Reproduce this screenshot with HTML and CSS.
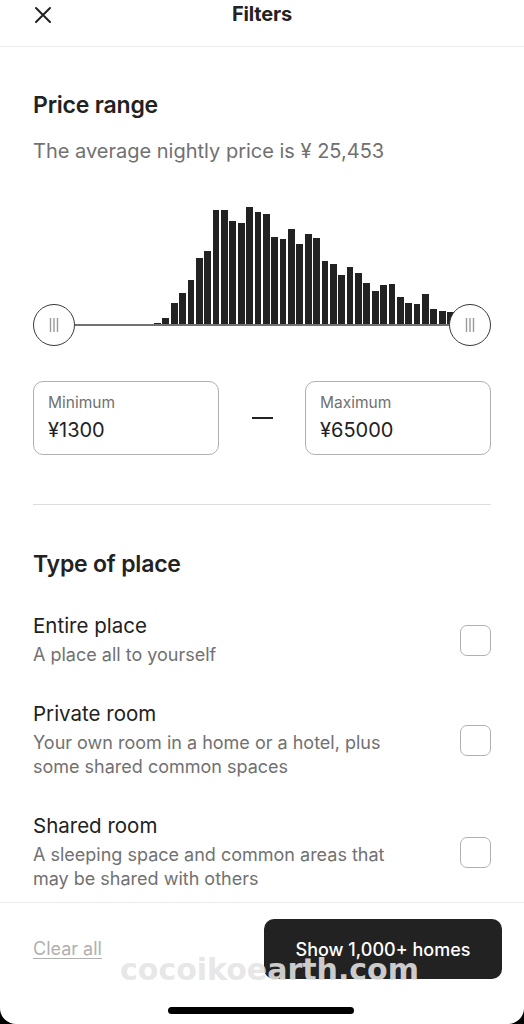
FILE: index.html
```html
<!DOCTYPE html>
<html lang="en">
<head>
<meta charset="utf-8">
<title>Filters</title>
<link rel="stylesheet" href="styles.css">
</head>
<body>
<div class="screen">
  <header class="topbar">
    <button class="close" aria-label="Close">
      <svg width="18" height="18" viewBox="0 0 18 18"><path d="M2 2 L16 16 M16 2 L2 16" stroke="#222" stroke-width="2" fill="none" stroke-linecap="round"/></svg>
    </button>
    <h1 class="title">Filters</h1>
    <span></span>
  </header>

  <main class="content">
    <section class="price">
      <h2 class="section-title first">Price range</h2>
      <p class="sub">The average nightly price is ¥ 25,453</p>

      <div class="hist">
        <span class="bar" style="height:2px"></span>
        <span class="bar" style="height:7px"></span>
        <span class="bar" style="height:22px"></span>
        <span class="bar" style="height:32px"></span>
        <span class="bar" style="height:45px"></span>
        <span class="bar" style="height:67px"></span>
        <span class="bar" style="height:74px"></span>
        <span class="bar" style="height:115px"></span>
        <span class="bar" style="height:115px"></span>
        <span class="bar" style="height:104px"></span>
        <span class="bar" style="height:102px"></span>
        <span class="bar" style="height:118px"></span>
        <span class="bar" style="height:113px"></span>
        <span class="bar" style="height:111px"></span>
        <span class="bar" style="height:88px"></span>
        <span class="bar" style="height:86px"></span>
        <span class="bar" style="height:96px"></span>
        <span class="bar" style="height:81px"></span>
        <span class="bar" style="height:91px"></span>
        <span class="bar" style="height:87px"></span>
        <span class="bar" style="height:64px"></span>
        <span class="bar" style="height:61px"></span>
        <span class="bar" style="height:50px"></span>
        <span class="bar" style="height:58px"></span>
        <span class="bar" style="height:52px"></span>
        <span class="bar" style="height:42px"></span>
        <span class="bar" style="height:34px"></span>
        <span class="bar" style="height:40px"></span>
        <span class="bar" style="height:41px"></span>
        <span class="bar" style="height:28px"></span>
        <span class="bar" style="height:22px"></span>
        <span class="bar" style="height:21px"></span>
        <span class="bar" style="height:31px"></span>
        <span class="bar" style="height:16px"></span>
        <span class="bar" style="height:14px"></span>
        <span class="bar" style="height:13px"></span>
      </div>

      <div class="track-row">
        <span class="handle">
          <svg width="12" height="16" viewBox="0 0 12 16"><path d="M2.5 1 V15 M6 1 V15 M9.5 1 V15" stroke="#9a9a9a" stroke-width="1.4"/></svg>
        </span>
        <span class="track"></span>
        <span class="handle">
          <svg width="12" height="16" viewBox="0 0 12 16"><path d="M2.5 1 V15 M6 1 V15 M9.5 1 V15" stroke="#9a9a9a" stroke-width="1.4"/></svg>
        </span>
      </div>

      <div class="inputs">
        <div class="field">
          <span class="field-label">Minimum</span>
          <span class="field-value">¥1300</span>
        </div>
        <span class="dash"></span>
        <div class="field">
          <span class="field-label">Maximum</span>
          <span class="field-value">¥65000</span>
        </div>
      </div>
    </section>

    <hr class="divider">

    <section class="types">
      <h2 class="section-title">Type of place</h2>
      <ul class="type-list">
        <li class="type-item">
          <div class="type-text">
            <div class="type-name">Entire place</div>
            <div class="type-desc">A place all to yourself</div>
          </div>
          <span class="checkbox"></span>
        </li>
        <li class="type-item">
          <div class="type-text">
            <div class="type-name">Private room</div>
            <div class="type-desc">Your own room in a home or a hotel, plus some shared common spaces</div>
          </div>
          <span class="checkbox"></span>
        </li>
        <li class="type-item">
          <div class="type-text">
            <div class="type-name">Shared room</div>
            <div class="type-desc">A sleeping space and common areas that may be shared with others</div>
          </div>
          <span class="checkbox"></span>
        </li>
      </ul>
    </section>
  </main>

  <footer class="footer">
    <a class="clear" href="#">Clear all</a>
    <button class="show">Show 1,000+ homes</button>
  </footer>

  <div class="watermark">cocoikoearth.com</div>
  <div class="home-indicator"></div>
</div>
</body>
</html>
```

FILE: styles.css
```css
* { box-sizing: border-box; }

html, body {
  margin: 0;
  padding: 0;
  background: #000;
}

body {
  font-family: "Inter", "Noto Sans", sans-serif;
  color: #222222;
}

.screen {
  position: relative;
  width: 524px;
  height: 1024px;
  background: #fff;
  display: flex;
  flex-direction: column;
  overflow: hidden;
  border-radius: 0 0 16px 16px;
}

/* header */
.topbar {
  flex: 0 0 auto;
  height: 47px;
  border-bottom: 1px solid #ebebeb;
  display: grid;
  grid-template-columns: 1fr auto 1fr;
  align-items: start;
}

.close {
  justify-self: start;
  margin: 6px 0 0 34px;
  padding: 0;
  border: 0;
  background: none;
  width: 18px;
  height: 18px;
  display: flex;
}

.title {
  margin: 0;
  font-size: 20px;
  line-height: 29px;
  font-weight: 700;
  letter-spacing: -0.2px;
}

/* content */
.content {
  flex: 1 1 auto;
  overflow: hidden;
  padding: 0 33px;
}

.section-title {
  margin: 44px 0 0;
  font-size: 23px;
  line-height: 30px;
  font-weight: 600;
  letter-spacing: -0.2px;
}

.section-title.first {
  margin-top: 43px;
}

.sub {
  margin: 17px 0 0;
  font-size: 20px;
  line-height: 28px;
  color: #717171;
}

/* histogram */
.hist {
  margin: 40px 0 0 121px;
  width: 300px;
  height: 120px;
  display: grid;
  grid-template-columns: repeat(36, 1fr);
  column-gap: 1.6px;
  align-items: end;
}

.bar {
  display: block;
  background: #222222;
}

.track-row {
  margin-top: -21px;
  height: 42px;
  display: flex;
  align-items: center;
}

.handle {
  flex: 0 0 42px;
  height: 42px;
  border-radius: 50%;
  border: 1.5px solid #3a3a3a;
  background: #fff;
  display: flex;
  align-items: center;
  justify-content: center;
  position: relative;
  z-index: 1;
}

.track {
  flex: 1 1 auto;
  height: 2px;
  background: #717171;
}

/* inputs */
.inputs {
  margin-top: 35px;
  display: flex;
  align-items: center;
  justify-content: space-between;
}

.field {
  width: 186px;
  height: 74px;
  border: 1px solid #b0b0b0;
  border-radius: 10px;
  padding: 11px 14px 0;
  display: flex;
  flex-direction: column;
  gap: 4px;
}

.field-label {
  font-size: 15.5px;
  line-height: 20px;
  color: #717171;
}

.field-value {
  font-size: 20px;
  line-height: 26px;
  color: #222;
}

.dash {
  width: 21px;
  height: 1.5px;
  background: #222;
}

.divider {
  margin: 49px 0 0;
  border: 0;
  border-top: 1px solid #dddddd;
}

/* types */
.type-list {
  list-style: none;
  margin: 34px 0 0;
  padding: 0;
  display: flex;
  flex-direction: column;
  gap: 34px;
}

.type-item {
  display: flex;
  align-items: center;
  justify-content: space-between;
}

.type-text {
  width: 380px;
}

.type-name {
  font-size: 20.5px;
  line-height: 26px;
  color: #222;
}

.type-desc {
  margin-top: 4px;
  font-size: 18px;
  line-height: 24px;
  color: #717171;
}

.checkbox {
  flex: 0 0 31px;
  height: 31px;
  border: 1px solid #b0b0b0;
  border-radius: 7px;
}

/* footer */
.footer {
  flex: 0 0 122px;
  border-top: 1px solid #ebebeb;
  padding: 16px 22px 0 33px;
  display: flex;
  justify-content: space-between;
  align-items: flex-start;
}

.clear {
  margin-top: 18px;
  font-size: 18px;
  line-height: 24px;
  color: #b0b0b0;
  text-decoration: underline;
  text-underline-offset: 3px;
}

.show {
  width: 238px;
  height: 60px;
  border: 0;
  border-radius: 10px;
  background: #222222;
  color: #fff;
  font-family: inherit;
  font-size: 18px;
  font-weight: 500;
}

.watermark {
  position: absolute;
  left: 120px;
  top: 952px;
  font-family: "DejaVu Sans", sans-serif;
  font-weight: 700;
  font-size: 30px;
  line-height: 36px;
  color: rgba(228, 228, 228, 0.9);
  white-space: nowrap;
  pointer-events: none;
}

.home-indicator {
  position: absolute;
  left: 168px;
  top: 1007px;
  width: 186px;
  height: 7px;
  border-radius: 4px;
  background: #000;
}
```
